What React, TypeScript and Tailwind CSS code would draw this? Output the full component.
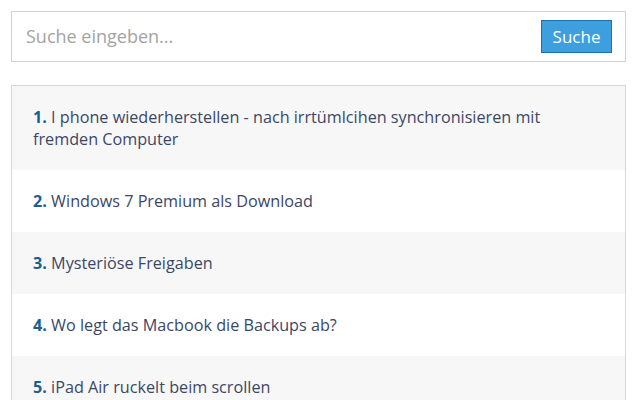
const fragen = [
  "I phone wiederherstellen - nach irrtümlcihen synchronisieren mit fremden Computer",
  "Windows 7 Premium als Download",
  "Mysteriöse Freigaben",
  "Wo legt das Macbook die Backups ab?",
  "iPad Air ruckelt beim scrollen",
];

export default function App() {
  return (
    <div
      className="h-[400px] w-[640px] overflow-hidden bg-white pl-[11px] pr-[14px] pt-[11px]"
      style={{ fontFamily: '"Open Sans", "Noto Sans", sans-serif' }}
    >
      <div className="flex h-[51px] items-center border border-[#d2d2d2] pl-[14px] pr-[13px]">
        <input
          className="flex-1 bg-transparent text-[18px] text-[#333] outline-none placeholder:text-[#a3a3a3]"
          placeholder="Suche eingeben..."
        />
        <button className="h-[33px] w-[71px] border border-[#1f6fa8] bg-[#3d9fdd] text-[17px] font-medium text-white">
          Suche
        </button>
      </div>

      <div className="mt-[23px] border border-[#d7d7d7]">
        {fragen.map((frage, i) => (
          <div
            key={i}
            className={
              "pl-[21px] pr-[36px] py-[20px] text-[16.2px] leading-[22px] text-[#3b4766] " +
              (i % 2 === 0 ? "bg-[#f7f7f7]" : "bg-white")
            }
          >
            <span className="font-bold text-[#1d5f8c]">{i + 1}.</span> {frage}
          </div>
        ))}
      </div>
    </div>
  );
}
